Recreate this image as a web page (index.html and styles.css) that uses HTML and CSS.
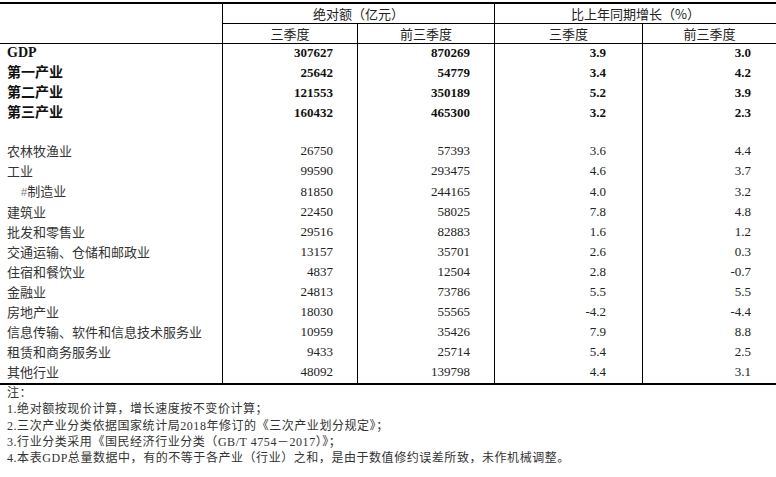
FILE: index.html
```html
<!DOCTYPE html>
<html lang="zh-CN">
<head>
<meta charset="utf-8">
<title>GDP</title>
<link rel="stylesheet" href="styles.css">
</head>
<body>
<table class="data">
  <colgroup>
    <col class="c-label"><col class="c-a"><col class="c-b"><col class="c-c"><col class="c-d">
  </colgroup>
  <thead>
    <tr class="h1">
      <th class="lab" rowspan="2"></th>
      <th colspan="2">绝对额（亿元）</th>
      <th colspan="2">比上年同期增长（%）</th>
    </tr>
    <tr class="h2">
      <th>三季度</th><th>前三季度</th><th>三季度</th><th>前三季度</th>
    </tr>
  </thead>
  <tbody>
    <tr class="bold"><td class="lab">GDP</td><td class="na">307627</td><td class="nb">870269</td><td class="nc">3.9</td><td class="nd">3.0</td></tr>
    <tr class="bold"><td class="lab">第一产业</td><td class="na">25642</td><td class="nb">54779</td><td class="nc">3.4</td><td class="nd">4.2</td></tr>
    <tr class="bold"><td class="lab">第二产业</td><td class="na">121553</td><td class="nb">350189</td><td class="nc">5.2</td><td class="nd">3.9</td></tr>
    <tr class="bold"><td class="lab">第三产业</td><td class="na">160432</td><td class="nb">465300</td><td class="nc">3.2</td><td class="nd">2.3</td></tr>
    <tr class="blank"><td class="lab">&nbsp;</td><td>&nbsp;</td><td>&nbsp;</td><td>&nbsp;</td><td>&nbsp;</td></tr>
    <tr><td class="lab">农林牧渔业</td><td class="na">26750</td><td class="nb">57393</td><td class="nc">3.6</td><td class="nd">4.4</td></tr>
    <tr><td class="lab">工业</td><td class="na">99590</td><td class="nb">293475</td><td class="nc">4.6</td><td class="nd">3.7</td></tr>
    <tr><td class="lab sub"><span class="hash">#</span>制造业</td><td class="na">81850</td><td class="nb">244165</td><td class="nc">4.0</td><td class="nd">3.2</td></tr>
    <tr><td class="lab">建筑业</td><td class="na">22450</td><td class="nb">58025</td><td class="nc">7.8</td><td class="nd">4.8</td></tr>
    <tr><td class="lab">批发和零售业</td><td class="na">29516</td><td class="nb">82883</td><td class="nc">1.6</td><td class="nd">1.2</td></tr>
    <tr><td class="lab">交通运输、仓储和邮政业</td><td class="na">13157</td><td class="nb">35701</td><td class="nc">2.6</td><td class="nd">0.3</td></tr>
    <tr><td class="lab">住宿和餐饮业</td><td class="na">4837</td><td class="nb">12504</td><td class="nc">2.8</td><td class="nd">-0.7</td></tr>
    <tr><td class="lab">金融业</td><td class="na">24813</td><td class="nb">73786</td><td class="nc">5.5</td><td class="nd">5.5</td></tr>
    <tr><td class="lab">房地产业</td><td class="na">18030</td><td class="nb">55565</td><td class="nc">-4.2</td><td class="nd">-4.4</td></tr>
    <tr><td class="lab">信息传输、软件和信息技术服务业</td><td class="na">10959</td><td class="nb">35426</td><td class="nc">7.9</td><td class="nd">8.8</td></tr>
    <tr><td class="lab">租赁和商务服务业</td><td class="na">9433</td><td class="nb">25714</td><td class="nc">5.4</td><td class="nd">2.5</td></tr>
    <tr><td class="lab">其他行业</td><td class="na">48092</td><td class="nb">139798</td><td class="nc">4.4</td><td class="nd">3.1</td></tr>
  </tbody>
</table>
<div class="notes">
  <p>注：</p>
  <p>1.绝对额按现价计算，增长速度按不变价计算；</p>
  <p>2.三次产业分类依据国家统计局2018年修订的《三次产业划分规定》；</p>
  <p>3.行业分类采用《国民经济行业分类（GB/T 4754－2017）》；</p>
  <p>4.本表GDP总量数据中，有的不等于各产业（行业）之和，是由于数值修约误差所致，未作机械调整。</p>
</div>
</body>
</html>
```
FILE: styles.css
```css
html, body {
  margin: 0;
  padding: 0;
  background: #fff;
}
body {
  font-family: "Liberation Serif", "Noto Sans CJK SC", serif;
  color: #222;
}
.data {
  width: 776px;
  margin-top: 2px;
  border-collapse: separate;
  border-spacing: 0;
  table-layout: fixed;
  border-top: 2px solid #000;
  border-bottom: 2px solid #000;
}
.c-label { width: 222px; }
.c-a { width: 135px; }
.c-b { width: 137px; }
.c-c { width: 148px; }
.c-d { width: 134px; }

.data th {
  font-family: "Noto Sans CJK SC", sans-serif;
  font-weight: normal;
  font-size: 13px;
  color: #222;
  line-height: 19px;
  padding: 0;
  text-align: center;
  border-left: 1px solid #000;
  border-bottom: 1px solid #000;
}
.data th.lab {
  border-left: none;
}
.data td {
  padding: 0 0 2px 0;
  line-height: 18px;
  font-size: 13px;
  border-left: 1px solid #000;
  white-space: nowrap;
}
.data tr.blank td {
  line-height: 16px;
}
.data td.lab {
  border-left: none;
  padding-left: 7px;
  font-family: "Noto Sans CJK SC", sans-serif;
  color: #333;
}
.data td.sub {
  padding-left: 21px;
}
.hash {
  font-family: "Liberation Sans", sans-serif;
  font-size: 11px;
  color: #777;
}
.na { text-align: right; padding-right: 24px !important; }
.nb { text-align: right; padding-right: 24px !important; }
.nc { text-align: right; padding-right: 36px !important; }
.nd { text-align: right; padding-right: 25px !important; }

.data tr.bold td {
  font-weight: bold;
  color: #111;
}
.data tr.bold td.lab {
  font-family: "Liberation Serif", "Noto Sans CJK SC", serif;
  font-size: 14px;
  color: #111;
}

.notes {
  padding-left: 7px;
  font-family: "Liberation Serif", "Noto Sans CJK SC", serif;
  font-size: 12px;
  letter-spacing: 0.55px;
  color: #333;
}
.notes p {
  margin: 0;
  line-height: 16.3px;
}
```
